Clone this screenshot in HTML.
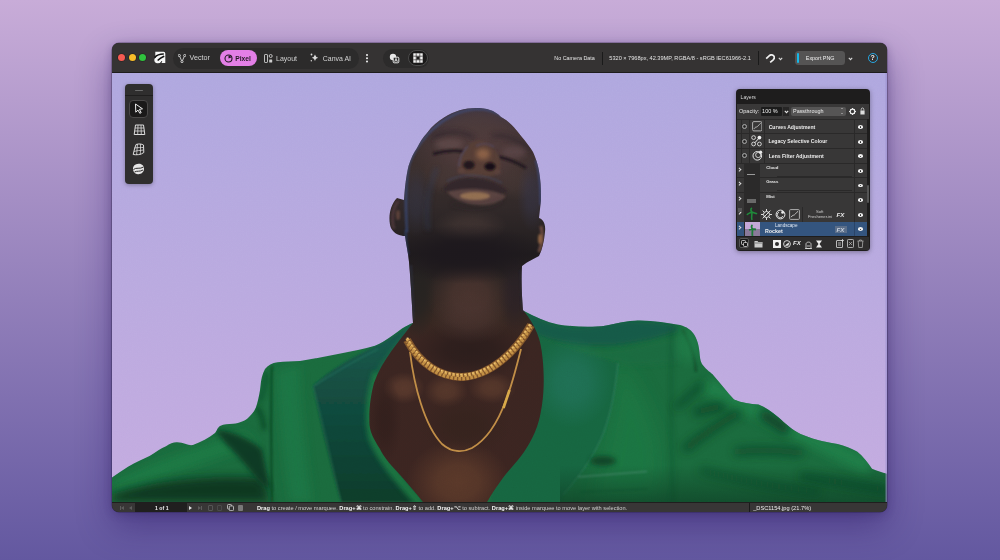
<!DOCTYPE html>
<html><head><meta charset="utf-8">
<style>
*{margin:0;padding:0;box-sizing:border-box}
html,body{width:1000px;height:560px;overflow:hidden}
body{position:relative;font-family:"Liberation Sans",sans-serif;background:linear-gradient(180deg,#c8acd8 0%,#6358a0 100%)}
.win{will-change:transform;position:absolute;left:112px;top:43px;width:775px;height:469px;border-radius:7px;background:#2a2929;overflow:hidden;box-shadow:0 0 0 0.5px rgba(30,20,50,.5),0 2px 8px rgba(40,25,80,.3),0 14px 34px rgba(40,20,100,.45)}
.title{position:absolute;left:0;top:0;width:775px;height:30px;background:#353333;border-bottom:1px solid #1e1d1d}
.canvas{position:absolute;left:0;top:30px;width:775px;height:428.5px;overflow:hidden}
.status{position:absolute;left:0;top:458.5px;width:775px;height:10.5px;background:#383636;border-top:0.8px solid #1f1e1e}
.abs{position:absolute}
.txt{color:#e8e8e8;white-space:nowrap}
.dot{top:11.3px;width:7px;height:7px;border-radius:50%;box-shadow:0 0 0 0.6px rgba(0,0,0,.35)}
.row{left:1px;width:130.5px;background:#383737}
.chk{left:6.2px;width:5px;height:5px;border-radius:50%;border:1.1px solid #a8a8a8;margin-top:-0.6px}
.chk::after{content:"";position:absolute;left:1.1px;top:1.1px;width:0.9px;height:0.9px;border-radius:50%;background:#111}
.lt{font-size:5.1px;line-height:6px;font-weight:700;color:#ececec}
.sm{font-size:4.3px;line-height:5px;font-weight:700;color:#e6e6e6}
.arr{left:2.2px;width:2.6px;height:2.6px;border-right:1px solid #e0e0e0;border-top:1px solid #e0e0e0;transform:rotate(45deg)}
.eye{left:121.9px;width:5.4px;height:3.8px;border-radius:50%;background:#f0f0f0;margin-top:0.2px}
.eye::after{content:"";position:absolute;left:1.9px;top:1.1px;width:1.6px;height:1.6px;border-radius:50%;background:#222}
.fx{font-size:6.2px;line-height:7px;font-weight:700;color:#e8e8e8;font-style:italic}
.stat{font-size:5.68px;line-height:6.5px;color:#d0d0d0}
.stat b{color:#f4f4f4}
</style></head><body>
<div class="win">
<div class="title">
  <div class="abs dot" style="left:6.4px;background:#f65b52"></div>
  <div class="abs dot" style="left:16.8px;background:#f8bd2a"></div>
  <div class="abs dot" style="left:27.2px;background:#30c23e"></div>
  <svg class="abs" style="left:41.9px;top:8.3px" width="12" height="13" viewBox="0 0 12 13">
    <path d="M1.3,0.8 L9.6,0.8 Q11.3,0.8 11.3,2.6 L11.3,12 L7.4,12 L7.6,10.9 Q6,12.3 3.4,12.2 Q0.3,12 0.3,9 Q0.3,6.4 3.5,5.4 L1.3,5.4 Z" fill="#f6f6f6"/>
    <path d="M0.5,6.6 Q3.8,2.9 9.8,3" stroke="#111" stroke-width="1.6" fill="none"/>
    <path d="M4.2,9 Q6.3,6.9 9.6,5.5" stroke="#111" stroke-width="1.7" fill="none" stroke-linecap="round"/><path d="M6.6,12.2 L7.9,10" stroke="#111" stroke-width="0.8"/>
  </svg>
  <div class="abs" style="left:61.2px;top:4.5px;width:186px;height:21px;border-radius:10.5px;background:#2c2b2b"></div>
  <!-- Vector -->
  <svg class="abs" style="left:65.5px;top:10.5px" width="8" height="9" viewBox="0 0 8 9">
    <circle cx="1.3" cy="1.5" r="1.1" fill="none" stroke="#d8d8d8" stroke-width="0.9"/>
    <circle cx="6.7" cy="1.5" r="1.1" fill="none" stroke="#d8d8d8" stroke-width="0.9"/>
    <circle cx="4" cy="7.6" r="1.1" fill="none" stroke="#d8d8d8" stroke-width="0.9"/>
    <path d="M1.8,2.5 L3.5,6.6 M6.2,2.5 L4.5,6.6" stroke="#d8d8d8" stroke-width="0.9"/>
  </svg>
  <div class="abs txt" style="left:77.6px;top:11.3px;font-size:7.16px;line-height:9px;color:#d4d4d4">Vector</div>
  <div class="abs" style="left:107.7px;top:6.75px;width:37.5px;height:16px;border-radius:8px;background:#e37fe6"></div>
  <svg class="abs" style="left:111.8px;top:10.6px" width="9" height="9" viewBox="0 0 9 9">
    <circle cx="4.5" cy="4.5" r="3.5" fill="none" stroke="#231a24" stroke-width="1.1"/>
    <path d="M4.5,4.5 L4.5,1.5 A3,3 0 0 1 7.3,3.6 Z" fill="#231a24"/>
  </svg>
  <div class="abs txt" style="left:123.3px;top:11px;font-size:6.7px;line-height:9px;font-weight:700;color:#231a24">Pixel</div>
  <svg class="abs" style="left:152px;top:10.5px" width="9" height="9" viewBox="0 0 9 9">
    <rect x="0.5" y="0.5" width="3" height="8" rx="0.6" fill="none" stroke="#cfcfcf" stroke-width="0.9"/>
    <rect x="5.2" y="0.5" width="3" height="3" rx="1.5" fill="none" stroke="#cfcfcf" stroke-width="0.9"/>
    <rect x="5.2" y="5.5" width="3" height="3" rx="0.5" fill="#cfcfcf"/>
  </svg>
  <div class="abs txt" style="left:164px;top:10.9px;font-size:7px;line-height:9px;color:#d0d0d0">Layout</div>
  <svg class="abs" style="left:198.3px;top:10.3px" width="9" height="9" viewBox="0 0 9 9">
    <path d="M5,1.5 Q5.6,4 8.2,4.8 Q5.6,5.4 5,8 Q4.4,5.4 1.8,4.8 Q4.4,4 5,1.5 Z" fill="#dcdcdc"/>
    <circle cx="1.5" cy="1.5" r="0.9" fill="#dcdcdc"/>
    <circle cx="1.3" cy="7.8" r="0.7" fill="#dcdcdc"/>
  </svg>
  <div class="abs txt" style="left:210.8px;top:10.9px;font-size:6.95px;line-height:9px;color:#d4d4d4">Canva AI</div>
  <div class="abs" style="left:253.6px;top:10.5px;width:2.1px;height:2.1px;border-radius:50%;background:#f4f4f4;box-shadow:0 3.25px 0 #f4f4f4,0 6.5px 0 #f4f4f4"></div>
  <div class="abs" style="left:271.2px;top:6px;width:46px;height:18.8px;border-radius:9.4px;background:#2c2b2b"></div>
  <svg class="abs" style="left:276.5px;top:10px" width="11" height="11" viewBox="0 0 11 11">
    <circle cx="4" cy="4" r="3.2" fill="#e8e8e8"/>
    <rect x="4.2" y="4.2" width="5.6" height="5.6" rx="1" fill="#2a2a2a" stroke="#e8e8e8" stroke-width="1"/>
    <path d="M5.6,8.8 L7,5.4 L8.4,8.8 M6.1,7.7 L7.9,7.7" stroke="#e8e8e8" stroke-width="0.8" fill="none"/>
  </svg>
  <div class="abs" style="left:296px;top:6.75px;width:20.3px;height:16.5px;border-radius:8px;background:#1b1a1a;border:1px solid #4a4a4a"></div>
  <svg class="abs" style="left:301.2px;top:9.8px" width="10" height="10" viewBox="0 0 10 10">
    <rect x="0.3" y="0.3" width="9.4" height="9.4" fill="#f2f2f2"/>
    <rect x="3.5" y="3.5" width="3" height="3" fill="#1b1a1a"/>
    <path d="M3.2,0.3 V9.7 M6.8,0.3 V9.7 M0.3,3.2 H9.7 M0.3,6.8 H9.7" stroke="#1b1a1a" stroke-width="0.6"/>
  </svg>
  <div class="abs txt" style="left:442.3px;top:12.2px;font-size:5.42px;line-height:7px;color:#e4e4e4">No Camera Data</div>
  <div class="abs" style="left:490.3px;top:8.6px;width:0.9px;height:13.2px;background:#1a1a1a"></div>
  <div class="abs txt" style="left:497.3px;top:12.2px;font-size:5.6px;line-height:7px;color:#e4e4e4">5320 × 7968px, 42.39MP, RGBA/8 - sRGB IEC61966-2.1</div>
  <div class="abs" style="left:645.8px;top:8px;width:0.9px;height:13.8px;background:#1a1a1a"></div>
  <svg class="abs" style="left:653.2px;top:10.8px" width="10" height="9" viewBox="0 0 10 9">
    <path d="M1.2,4.6 L4.4,1.6 C5.8,0.4 7.8,0.6 8.8,2 C9.6,3.2 9.3,4.8 8.2,5.8 L5.2,8.4" stroke="#f0f0f0" stroke-width="1.7" fill="none"/>
    <path d="M3.2,6.2 L6.4,3.4" stroke="#353333" stroke-width="1" fill="none"/>
  </svg>
  <svg class="abs" style="left:665.7px;top:13.6px" width="5" height="4" viewBox="0 0 5 4"><path d="M0.8,0.9 L2.5,2.6 L4.2,0.9" stroke="#dcdcdc" stroke-width="1.1" fill="none"/></svg>
  <div class="abs" style="left:683px;top:8.2px;width:50.4px;height:13.6px;border-radius:3.5px;background:#555454"></div>
  <div class="abs" style="left:685px;top:10.4px;width:2.4px;height:9.6px;border-radius:1px;background:#16b8e8"></div>
  <div class="abs txt" style="left:693.8px;top:12px;font-size:5.4px;line-height:7px;color:#f0f0f0">Export PNG</div>
  <svg class="abs" style="left:736.1px;top:13.6px" width="5" height="4" viewBox="0 0 5 4"><path d="M0.8,0.9 L2.5,2.6 L4.2,0.9" stroke="#dcdcdc" stroke-width="1.1" fill="none"/></svg>
  <div class="abs" style="left:755.9px;top:10px;width:10px;height:10px;border-radius:50%;border:1.3px solid #27a6e0"></div>
  <div class="abs txt" style="left:758.6px;top:11.2px;font-size:7px;line-height:8px;font-weight:700;color:#f0f0f0">?</div>
</div>
<div class="canvas">
<svg width="775" height="429" viewBox="112 73 775 429" style="position:absolute;left:0;top:0">
<defs>
  <linearGradient id="sky" x1="0" y1="0" x2="0" y2="1">
    <stop offset="0" stop-color="#afa7df"/>
    <stop offset="1" stop-color="#c4abe0"/>
  </linearGradient>
  <filter id="b1" filterUnits="userSpaceOnUse" x="100" y="60" width="800" height="460"><feGaussianBlur stdDeviation="1"/></filter>
  <filter id="b2" filterUnits="userSpaceOnUse" x="100" y="60" width="800" height="460"><feGaussianBlur stdDeviation="2.5"/></filter>
  <filter id="b4" filterUnits="userSpaceOnUse" x="100" y="60" width="800" height="460"><feGaussianBlur stdDeviation="5"/></filter>
  <filter id="b8" filterUnits="userSpaceOnUse" x="100" y="60" width="800" height="460"><feGaussianBlur stdDeviation="9"/></filter>
  <radialGradient id="face" cx="480" cy="175" r="80" gradientUnits="userSpaceOnUse">
    <stop offset="0" stop-color="#5a4248"/>
    <stop offset="0.6" stop-color="#4a3e56"/>
    <stop offset="1" stop-color="#3f3d62"/>
  </radialGradient>
  <linearGradient id="neck" x1="0" y1="0" x2="0" y2="1">
    <stop offset="0" stop-color="#2c2230"/>
    <stop offset="0.35" stop-color="#46302e"/>
    <stop offset="1" stop-color="#3d2620"/>
  </linearGradient>
  <linearGradient id="jk" x1="0" y1="0" x2="0" y2="1">
    <stop offset="0" stop-color="#1d7238"/>
    <stop offset="1" stop-color="#1a6a34"/>
  </linearGradient>
  <clipPath id="jclip"><path id="jpath" d="M112,502 L112,477.5 C118,473 123,470 128,466.7 C136,462 143,459 150,455.8 C156,452 161,448 166,446.3 C170,443 174,442 177,442.2 C184,442 188,446 193,445 C201,442 209,438 215,433 C217,431 217,428 220,426 C224,424 228,424 233,423.8 C240,423 245,421 249,417 C253,413 256,409 257,404 C259,397 260,391 260.5,386 C261,380 262,375 265,369 C268,365 272,363 277.5,362.2 C285,361.5 292,361.5 300,361 C314,359 327,356 340.5,353.4 C352,351 364,349 375,345.7 C386,341 394,334 402,328.4 C406,326 410,324 413.5,322.7 L524,311 C535,317 546,322 558,324.5 C571,326.5 584,327 597,326.5 C610,326 622,321 635,320.7 C651,320 666,323 680,325 C687,327 691,330 693,333 C697,338 699,346 699.5,352.5 C700,357 700,360 702,364 C707,371 711,372 714,376 C720,383 727,392 734,399.6 C742,403 750,404 758.5,404.6 C765,407 772,412 778,417 C785,423 792,430 800.5,434 C812,439 825,442 837.5,444 C845,446 851,448 857,451.5 C863,456 868,463 872,468.8 C877,471 882,472.5 887,473.7 L887,502 Z"/></clipPath>
  <filter id="grain" filterUnits="userSpaceOnUse" x="112" y="73" width="775" height="429"><feTurbulence type="fractalNoise" baseFrequency="0.8" numOctaves="2" seed="3"/><feColorMatrix type="matrix" values="0 0 0 0 0.5  0 0 0 0 0.5  0 0 0 0 0.5  0 0 0 0.09 0"/></filter>
<radialGradient id="rg0"><stop offset="0" stop-color="#287868" stop-opacity="0.500"/><stop offset="0.4" stop-color="#287868" stop-opacity="0.425"/><stop offset="0.7" stop-color="#287868" stop-opacity="0.200"/><stop offset="1" stop-color="#287868" stop-opacity="0"/></radialGradient>
<radialGradient id="rg1"><stop offset="0" stop-color="#22824a" stop-opacity="0.700"/><stop offset="0.4" stop-color="#22824a" stop-opacity="0.595"/><stop offset="0.7" stop-color="#22824a" stop-opacity="0.280"/><stop offset="1" stop-color="#22824a" stop-opacity="0"/></radialGradient>
<radialGradient id="rg2"><stop offset="0" stop-color="#22824a" stop-opacity="0.600"/><stop offset="0.4" stop-color="#22824a" stop-opacity="0.510"/><stop offset="0.7" stop-color="#22824a" stop-opacity="0.240"/><stop offset="1" stop-color="#22824a" stop-opacity="0"/></radialGradient>
<radialGradient id="rg3"><stop offset="0" stop-color="#5c3a2a" stop-opacity="0.900"/><stop offset="0.4" stop-color="#5c3a2a" stop-opacity="0.765"/><stop offset="0.7" stop-color="#5c3a2a" stop-opacity="0.360"/><stop offset="1" stop-color="#5c3a2a" stop-opacity="0"/></radialGradient>
<radialGradient id="rg4"><stop offset="0" stop-color="#33221c" stop-opacity="0.700"/><stop offset="0.4" stop-color="#33221c" stop-opacity="0.595"/><stop offset="0.7" stop-color="#33221c" stop-opacity="0.280"/><stop offset="1" stop-color="#33221c" stop-opacity="0"/></radialGradient>
<radialGradient id="rg5"><stop offset="0" stop-color="#221818" stop-opacity="0.600"/><stop offset="0.4" stop-color="#221818" stop-opacity="0.510"/><stop offset="0.7" stop-color="#221818" stop-opacity="0.240"/><stop offset="1" stop-color="#221818" stop-opacity="0"/></radialGradient>
<radialGradient id="rg6"><stop offset="0" stop-color="#4e3a3a" stop-opacity="1.000"/><stop offset="0.4" stop-color="#4e3a3a" stop-opacity="0.850"/><stop offset="0.7" stop-color="#4e3a3a" stop-opacity="0.400"/><stop offset="1" stop-color="#4e3a3a" stop-opacity="0"/></radialGradient>
<radialGradient id="rg7"><stop offset="0" stop-color="#4e3630" stop-opacity="0.800"/><stop offset="0.4" stop-color="#4e3630" stop-opacity="0.680"/><stop offset="0.7" stop-color="#4e3630" stop-opacity="0.320"/><stop offset="1" stop-color="#4e3630" stop-opacity="0"/></radialGradient>
<radialGradient id="rg8"><stop offset="0" stop-color="#4a3430" stop-opacity="0.600"/><stop offset="0.4" stop-color="#4a3430" stop-opacity="0.510"/><stop offset="0.7" stop-color="#4a3430" stop-opacity="0.240"/><stop offset="1" stop-color="#4a3430" stop-opacity="0"/></radialGradient>
<radialGradient id="rg9"><stop offset="0" stop-color="#1c171c" stop-opacity="1.000"/><stop offset="0.4" stop-color="#1c171c" stop-opacity="0.850"/><stop offset="0.7" stop-color="#1c171c" stop-opacity="0.400"/><stop offset="1" stop-color="#1c171c" stop-opacity="0"/></radialGradient>
<radialGradient id="rg10"><stop offset="0" stop-color="#21804a" stop-opacity="0.600"/><stop offset="0.4" stop-color="#21804a" stop-opacity="0.510"/><stop offset="0.7" stop-color="#21804a" stop-opacity="0.240"/><stop offset="1" stop-color="#21804a" stop-opacity="0"/></radialGradient>
<radialGradient id="rg11"><stop offset="0" stop-color="#22824e" stop-opacity="0.600"/><stop offset="0.4" stop-color="#22824e" stop-opacity="0.510"/><stop offset="0.7" stop-color="#22824e" stop-opacity="0.240"/><stop offset="1" stop-color="#22824e" stop-opacity="0"/></radialGradient>
<radialGradient id="rg12"><stop offset="0" stop-color="#5e3c2e" stop-opacity="0.800"/><stop offset="0.4" stop-color="#5e3c2e" stop-opacity="0.680"/><stop offset="0.7" stop-color="#5e3c2e" stop-opacity="0.320"/><stop offset="1" stop-color="#5e3c2e" stop-opacity="0"/></radialGradient>
<radialGradient id="rg13"><stop offset="0" stop-color="#5a3a2c" stop-opacity="0.800"/><stop offset="0.4" stop-color="#5a3a2c" stop-opacity="0.680"/><stop offset="0.7" stop-color="#5a3a2c" stop-opacity="0.320"/><stop offset="1" stop-color="#5a3a2c" stop-opacity="0"/></radialGradient>
<radialGradient id="rg14"><stop offset="0" stop-color="#5a3a2c" stop-opacity="0.800"/><stop offset="0.4" stop-color="#5a3a2c" stop-opacity="0.680"/><stop offset="0.7" stop-color="#5a3a2c" stop-opacity="0.320"/><stop offset="1" stop-color="#5a3a2c" stop-opacity="0"/></radialGradient>
<radialGradient id="rg15"><stop offset="0" stop-color="#2a1a18" stop-opacity="0.500"/><stop offset="0.4" stop-color="#2a1a18" stop-opacity="0.425"/><stop offset="0.7" stop-color="#2a1a18" stop-opacity="0.200"/><stop offset="1" stop-color="#2a1a18" stop-opacity="0"/></radialGradient>
<radialGradient id="rg16"><stop offset="0" stop-color="#443634" stop-opacity="0.700"/><stop offset="0.4" stop-color="#443634" stop-opacity="0.595"/><stop offset="0.7" stop-color="#443634" stop-opacity="0.280"/><stop offset="1" stop-color="#443634" stop-opacity="0"/></radialGradient>
<radialGradient id="rg17"><stop offset="0" stop-color="#443634" stop-opacity="0.600"/><stop offset="0.4" stop-color="#443634" stop-opacity="0.510"/><stop offset="0.7" stop-color="#443634" stop-opacity="0.240"/><stop offset="1" stop-color="#443634" stop-opacity="0"/></radialGradient>
<radialGradient id="rg18"><stop offset="0" stop-color="#242220" stop-opacity="0.800"/><stop offset="0.4" stop-color="#242220" stop-opacity="0.680"/><stop offset="0.7" stop-color="#242220" stop-opacity="0.320"/><stop offset="1" stop-color="#242220" stop-opacity="0"/></radialGradient>
<radialGradient id="rg19"><stop offset="0" stop-color="#2a2028" stop-opacity="0.600"/><stop offset="0.4" stop-color="#2a2028" stop-opacity="0.510"/><stop offset="0.7" stop-color="#2a2028" stop-opacity="0.240"/><stop offset="1" stop-color="#2a2028" stop-opacity="0"/></radialGradient>
<radialGradient id="rg20"><stop offset="0" stop-color="#3e3230" stop-opacity="0.900"/><stop offset="0.4" stop-color="#3e3230" stop-opacity="0.765"/><stop offset="0.7" stop-color="#3e3230" stop-opacity="0.360"/><stop offset="1" stop-color="#3e3230" stop-opacity="0"/></radialGradient>
<radialGradient id="rg21"><stop offset="0" stop-color="#343c58" stop-opacity="0.330"/><stop offset="0.4" stop-color="#343c58" stop-opacity="0.281"/><stop offset="0.7" stop-color="#343c58" stop-opacity="0.132"/><stop offset="1" stop-color="#343c58" stop-opacity="0.000"/></radialGradient>
<radialGradient id="rg22"><stop offset="0" stop-color="#383c5c" stop-opacity="0.350"/><stop offset="0.4" stop-color="#383c5c" stop-opacity="0.297"/><stop offset="0.7" stop-color="#383c5c" stop-opacity="0.140"/><stop offset="1" stop-color="#383c5c" stop-opacity="0.000"/></radialGradient>
<radialGradient id="rg23"><stop offset="0" stop-color="#4a3a3a" stop-opacity="0.600"/><stop offset="0.4" stop-color="#4a3a3a" stop-opacity="0.510"/><stop offset="0.7" stop-color="#4a3a3a" stop-opacity="0.240"/><stop offset="1" stop-color="#4a3a3a" stop-opacity="0"/></radialGradient>
</defs>
<rect x="112" y="73" width="775" height="429" fill="url(#sky)"/>
<!-- jacket -->
<use href="#jpath" fill="#1a6a3d"/>
<g clip-path="url(#jclip)">
  <!-- left sleeve -->
  <path d="M112,482 C150,462 200,446 245,432 L258,446 C215,458 160,478 112,496 Z" fill="#1f7a45" filter="url(#b4)" opacity="0.8"/>
  <path d="M112,494 C150,482 205,474 262,478 L270,502 L112,502 Z" fill="#0c321e" filter="url(#b4)" opacity="0.9"/>
  <path d="M217,430 C235,432 252,440 262,450 L270,490 C255,480 245,462 232,450 C226,444 220,438 217,430 Z" fill="#0b3420" filter="url(#b2)" opacity="0.9"/>
  <path d="M257,407 C262,415 264,422 264,430" stroke="#0a3a1e" stroke-width="3.5" fill="none" filter="url(#b2)" opacity="0.8"/>
  <path d="M259,402 C264,393 266,385 266,372" stroke="#0d4424" stroke-width="3" fill="none" filter="url(#b2)" opacity="0.7"/>
  <path d="M272,366 C271,400 271,450 272,502" stroke="#0a3a1e" stroke-width="1.6" fill="none" filter="url(#b1)" opacity="0.8"/>
  <path d="M276,372 C279,420 284,470 290,502 L312,502 C305,450 300,400 300,364 Z" fill="#1e7846" filter="url(#b4)" opacity="0.7"/>
  <!-- left lapel -->
  <linearGradient id="llap" x1="0" y1="345" x2="0" y2="502" gradientUnits="userSpaceOnUse">
    <stop offset="0" stop-color="#145548"/>
    <stop offset="0.5" stop-color="#11463a"/>
    <stop offset="1" stop-color="#0e3c2a"/>
  </linearGradient>
  <path d="M313,386 C330,370 352,357 376,346 C394,337 405,328 414,323 L432,502 L341,502 C332,470 320,420 313,386 Z" fill="url(#llap)" filter="url(#b1)"/>
  <path d="M314,386 C335,372 356,360 378,349" stroke="#2a7a66" stroke-width="1.2" fill="none" filter="url(#b1)" opacity="0.7"/>
  <path d="M313,386 C325,430 333,470 341,502" stroke="#2a7a5a" stroke-width="1" fill="none" filter="url(#b1)" opacity="0.7"/>
  <path d="M378,372 C371,395 368,420 374,440 C385,465 405,485 421,504" stroke="#1b7842" stroke-width="10" fill="none" filter="url(#b2)" opacity="0.9"/>
  <path d="M412,330 C400,345 388,360 380,372" stroke="#1a6e44" stroke-width="8" fill="none" filter="url(#b2)" opacity="0.7"/>
  <!-- right collar / lapel -->
  <path d="M600,340 C625,360 650,400 660,440 C665,470 660,490 655,502 L590,502 C600,470 612,420 618,363 Z" fill="#1f7a45" filter="url(#b8)" opacity="0.6"/>
  <path d="M524,311 C540,318 550,323 558,325 C575,328 590,328 605,323 C620,320 650,320 672,324 L680,330 C660,338 640,342 620,345 C590,347 560,344 535,335 Z" fill="#175848" filter="url(#b2)" opacity="0.9"/>
  <path d="M545,343 C580,352 610,352 640,345 C660,340 672,338 680,338 L680,362 C650,365 630,368 618,363 C590,358 565,352 545,343 Z" fill="#1a6a42" filter="url(#b2)" opacity="0.6"/>
  <path d="M683,330 C690,345 695,355 696,372" stroke="#0e4426" stroke-width="2.5" fill="none" filter="url(#b1)" opacity="0.7"/>
  <path d="M526,330 C555,345 590,356 618,363 C616,385 612,410 604,432 C596,452 585,470 563,495 L560,502 L490,502 Z" fill="#186540" filter="url(#b1)"/>
  <ellipse cx="572" cy="382" rx="40" ry="46" fill="url(#rg0)"/>
  <path d="M618,363 C616,385 612,410 604,432 C596,452 585,470 563,495" stroke="#3e8a72" stroke-width="1" fill="none" filter="url(#b1)" opacity="0.7"/>
  <path d="M672,328 C671,370 670,430 673,502" stroke="#0e4426" stroke-width="1.6" fill="none" filter="url(#b2)" opacity="0.6"/>
  <path d="M578,477 L647,471.5" stroke="#76a89c" stroke-width="0.9" fill="none" filter="url(#b1)" opacity="0.7"/>
  <path d="M580,492 L648,489" stroke="#0f4a2a" stroke-width="1" fill="none" filter="url(#b1)" opacity="0.5"/>
  <ellipse cx="603" cy="461" rx="13" ry="5" fill="#0c3a22" filter="url(#b2)" opacity="0.8"/>
  <!-- right shoulder -->
  <ellipse cx="688" cy="345" rx="18" ry="25" fill="url(#rg10)"/>
  <!-- right sleeve -->
  <linearGradient id="rsb" x1="0" y1="465" x2="0" y2="502" gradientUnits="userSpaceOnUse"><stop offset="0" stop-color="#0c3a22" stop-opacity="0"/><stop offset="1" stop-color="#0c3a22" stop-opacity="0.75"/></linearGradient>
  <rect x="560" y="465" width="327" height="37" fill="url(#rsb)" opacity="0.8"/>
  <path d="M705,385 C740,400 790,432 870,466" stroke="#23874e" stroke-width="16" fill="none" filter="url(#b4)" opacity="0.65"/>
  <path d="M676,408 C686,399 694,391 703,384" stroke="#0b3a20" stroke-width="5" fill="none" filter="url(#b4)" opacity="0.8"/>
  <path d="M694,413 C704,410 713,408 724,406" stroke="#0b3a20" stroke-width="7" fill="none" filter="url(#b4)" opacity="0.85"/>
  <path d="M684,450 C700,437 720,423 740,412" stroke="#0c3c22" stroke-width="7" fill="none" filter="url(#b4)" opacity="0.8"/>
  <path d="M761,413 C769,418 778,424 788,431" stroke="#0a3620" stroke-width="10" fill="none" filter="url(#b4)" opacity="0.9"/>
  <path d="M735,452 C758,449 780,450 802,453" stroke="#0d4026" stroke-width="7" fill="none" filter="url(#b4)" opacity="0.8"/>
  <path d="M800,476 C830,480 858,486 887,490" stroke="#0d3e24" stroke-width="6" fill="none" filter="url(#b4)" opacity="0.8"/>
  <path d="M700,470 C740,480 780,488 820,492" stroke="#0d3e24" stroke-width="6" fill="none" filter="url(#b4)" opacity="0.6"/>
</g>
<!-- neck + chest -->
<linearGradient id="fig" x1="0" y1="109" x2="0" y2="502" gradientUnits="userSpaceOnUse">
  <stop offset="0" stop-color="#3a3444"/>
  <stop offset="0.06" stop-color="#3e3234"/>
  <stop offset="0.155" stop-color="#3a2e2c"/>
  <stop offset="0.25" stop-color="#302828"/>
  <stop offset="0.31" stop-color="#282223"/>
  <stop offset="0.37" stop-color="#1f1b1d"/>
  <stop offset="0.45" stop-color="#2a2321"/>
  <stop offset="0.53" stop-color="#342620"/>
  <stop offset="0.59" stop-color="#3a2521"/>
  <stop offset="1" stop-color="#3b2420"/>
</linearGradient>
<clipPath id="hclip"><path id="hpath" d="M423,502 C415,492 408,484 401,476 C392,466 384,458 380,449 C373,438 369,430 369.4,421 C369,408 371,394 374,383 C382,360 400,340 413,323 C412,305 411,285 409,262 C408,252 406,244 405,236 C400,236 394,234 391,228 C388,220 389,206 397,198 L404,200 C405,186 406,177 408.5,166 C411,158 414,152 417,148 C420,142 423,137 427,133 C432,126 438,121 444,117.5 C454,111 465,108 476,108 C487,108 494,110 501,117 C509,121 515,128 521,136 C526,142 530,147 533,152 C537,161 539,168 540,178 C541,186 541,193 541,200 L539,218 C543,219 546,224 545,232 C544,242 542,250 539,256 C533,259 527,262 522,266 C521,280 522,298 523,310 C530,318 537,330 540,342 C544,360 545,385 542,405 C540,418 538,425 535,432 C528,448 520,458 512,467 C503,477 496,487 487,502 Z"/></clipPath>
<use href="#hpath" fill="url(#fig)"/>
<g clip-path="url(#hclip)">
  <!-- chest -->
  <ellipse cx="404" cy="388" rx="21" ry="16" fill="url(#rg12)"/>
  <ellipse cx="446" cy="391" rx="22" ry="17" fill="url(#rg13)"/>
  <ellipse cx="492" cy="388" rx="24" ry="16" fill="url(#rg14)"/>
  <ellipse cx="458" cy="482" rx="52" ry="42" fill="url(#rg3)"/>
  <ellipse cx="465" cy="425" rx="46" ry="30" fill="url(#rg4)"/>
  <ellipse cx="385" cy="420" rx="17" ry="44" fill="url(#rg15)"/>
  <ellipse cx="470" cy="350" rx="61" ry="30" fill="url(#rg5)"/>
  <!-- warm center of face -->
  <ellipse cx="478" cy="150" rx="64" ry="52" fill="url(#rg6)"/>
  <ellipse cx="443" cy="176" rx="21" ry="19" fill="url(#rg16)"/>
  <ellipse cx="516" cy="182" rx="19" ry="19" fill="url(#rg17)"/>
  <!-- neck -->
  <ellipse cx="470" cy="295" rx="44" ry="36" fill="url(#rg7)"/>
  <ellipse cx="470" cy="318" rx="41" ry="26" fill="url(#rg8)"/>
  
  
  <ellipse cx="418" cy="295" rx="18" ry="44" fill="url(#rg18)"/>
  <ellipse cx="515" cy="295" rx="17" ry="39" fill="url(#rg19)"/>
  <!-- chin / lower face -->
  <ellipse cx="470" cy="226" rx="37" ry="18" fill="url(#rg20)"/>
  <ellipse cx="466" cy="254" rx="78" ry="30" fill="url(#rg9)"/>
  <!-- cheeks sheen -->
  <ellipse cx="416" cy="200" rx="15" ry="37" fill="url(#rg21)"/>
  <ellipse cx="532" cy="195" rx="15" ry="37" fill="url(#rg22)"/>
  <!-- rim highlight -->
  <path d="M407,232 C405,200 406,178 409,165 C412,154 418,145 427,135 C440,121 458,110 478,109 C490,109 497,112 503,117" stroke="#3e5590" stroke-width="2.4" fill="none" filter="url(#b1)" opacity="0.6"/>
  <path d="M437,168 C429,185 426,205 428,230" stroke="#2e3a56" stroke-width="3" fill="none" filter="url(#b2)" opacity="0.6"/>
  <path d="M408,255 C406,245 405,238 406,230" stroke="#34487a" stroke-width="2.2" fill="none" filter="url(#b1)" opacity="0.6"/>
  <path d="M536,160 C540,172 541,188 541,205" stroke="#40508a" stroke-width="3" fill="none" filter="url(#b1)" opacity="0.6"/>
  <path d="M521,270 C522,285 522,300 523,312" stroke="#2e3040" stroke-width="2" fill="none" filter="url(#b1)" opacity="0.6"/>
  <path d="M411,265 C412,290 413,305 413,320" stroke="#30344a" stroke-width="2" fill="none" filter="url(#b1)" opacity="0.6"/>
  <ellipse cx="476" cy="125" rx="37" ry="18" fill="url(#rg23)"/>
  <!-- brow / lids -->
  <path d="M432,138 C445,130 463,130 474,138" stroke="#2c222c" stroke-width="4" fill="none" filter="url(#b2)" opacity="0.6"/>
  <path d="M492,136 C505,134 520,140 530,150" stroke="#2c222c" stroke-width="4" fill="none" filter="url(#b2)" opacity="0.6"/>
  <ellipse cx="449" cy="144" rx="14" ry="5.5" fill="#5e4848" filter="url(#b2)" opacity="0.8"/>
  <ellipse cx="514" cy="152" rx="12" ry="6" fill="#5a4446" filter="url(#b2)" opacity="0.8"/>
  <path d="M433,154 C443,151 455,150 464,151.5" stroke="#1f161c" stroke-width="2.6" fill="none" filter="url(#b1)"/>
  <path d="M499,157 C509,159 518,163 526,168" stroke="#1f161c" stroke-width="2.6" fill="none" filter="url(#b1)"/>
  <!-- nose -->
  <path d="M472,142 C479,139 487,141 491,146 C498,152 502,161 500,170 C498,176 490,177 480,176 C469,176 459,175 458,168 C457,159 464,148 472,142 Z" fill="#543c36" filter="url(#b1)"/>
  <path d="M468,146 C463,151 459,158 459,167" stroke="#50527e" stroke-width="1.5" fill="none" filter="url(#b1)" opacity="0.6"/>
  <ellipse cx="483" cy="154" rx="7" ry="5.5" fill="#94664a" filter="url(#b2)" opacity="0.85"/>
  <path d="M476,146 C481,143 488,143 494,147" stroke="#54527a" stroke-width="1.3" fill="none" filter="url(#b1)" opacity="0.7"/>
  <ellipse cx="469" cy="165" rx="5.8" ry="4.2" fill="#22171a" filter="url(#b1)"/>
  <ellipse cx="490" cy="166.5" rx="5.5" ry="4" fill="#170f12" filter="url(#b1)"/>
  <ellipse cx="461" cy="171" rx="4" ry="3" fill="#5e4440" filter="url(#b1)" opacity="0.6"/>
  <ellipse cx="498" cy="172" rx="3.5" ry="3" fill="#5e4440" filter="url(#b1)" opacity="0.5"/>
  <!-- lips -->
  <path d="M442,190 C453,175 483,172 508,191 C500,197 470,198 442,190 Z" fill="#33262a" filter="url(#b1)"/>
  <path d="M447,181 C462,173 484,173 502,183" stroke="#3e4a6a" stroke-width="1.5" fill="none" filter="url(#b1)" opacity="0.5"/>
  <path d="M447,192 C463,187 488,187 506,196 C496,209 464,209 447,192 Z" fill="#584240" filter="url(#b1)"/>
  <ellipse cx="475" cy="196" rx="15" ry="4" fill="#9a7452" filter="url(#b1)" opacity="0.85"/>
  <path d="M452,204 C468,209 490,208 502,200" stroke="#2a2028" stroke-width="2" fill="none" filter="url(#b2)" opacity="0.6"/>
  <!-- ears -->
  <path d="M398,201 C393,208 391,220 394,229" stroke="#4a3438" stroke-width="3" fill="none" filter="url(#b1)"/>
  <ellipse cx="398" cy="215" rx="2" ry="5" fill="#6e4c40" filter="url(#b1)" opacity="0.7"/>
  <path d="M541,226 C543,235 542,245 539,252" stroke="#6a4a40" stroke-width="3" fill="none" filter="url(#b1)"/>
  <ellipse cx="540" cy="239" rx="2" ry="5" fill="#a07048" filter="url(#b1)" opacity="0.8"/>
</g>
<!-- chains -->
<path d="M410,352 C414,385 424,425 442,444 C451,452 462,453 472,448 C486,440 498,422 506,400 C512,385 517,365 521,349" stroke="#c08c46" stroke-width="1.8" fill="none"/>
<path d="M509.5,390 L503.5,408" stroke="#d8a848" stroke-width="2.6" fill="none"/>
<path d="M407,340 C420,364 440,377 462,377 C490,376 516,352 531,325" stroke="#80542a" stroke-width="8" fill="none"/>
<path d="M407,340 C420,364 440,377 462,377 C490,376 516,352 531,325" transform="translate(0,-1.7)" stroke="#d6a352" stroke-width="3.4" stroke-dasharray="2.6 1.4" fill="none"/>
<path d="M407,340 C420,364 440,377 462,377 C490,376 516,352 531,325" transform="translate(0,1.7)" stroke="#c28e44" stroke-width="3.4" stroke-dasharray="2.6 1.4" stroke-dashoffset="2" fill="none"/>
<path d="M407,340 C420,364 440,377 462,377 C490,376 516,352 531,325" transform="translate(0,-2.4)" stroke="#f4d080" stroke-width="1.1" stroke-dasharray="1.4 2.6" fill="none" opacity="0.8"/>
<rect x="112" y="73" width="775" height="429" filter="url(#grain)" style="mix-blend-mode:overlay"/>
<!-- canvas right border line -->
<rect x="885.5" y="73" width="1.5" height="429" fill="#9b8fd0" opacity="0.6"/>
</svg>
<!-- tool panel -->
<div class="abs" style="left:13px;top:10.6px;width:27.6px;height:100px;border-radius:4px;background:#2f2e2e;box-shadow:0 1px 4px rgba(0,0,0,.3)">
  <div class="abs" style="left:10px;top:6px;width:8px;height:1.3px;background:#6a6a6a;border-radius:1px"></div>
  <div class="abs" style="left:0;top:11.8px;width:27.6px;height:0.8px;background:#1f1e1e"></div>
  <div class="abs" style="left:4.4px;top:16px;width:18.6px;height:18px;border-radius:4px;background:#1a1919;border:1px solid #4a4848"></div>
  <svg class="abs" style="left:9px;top:19.5px" width="10" height="11" viewBox="0 0 10 11">
    <path d="M1.5,1 L8.5,5.8 L5.4,6.4 L7.2,9.6 L5.8,10.3 L4,7.1 L1.8,9.2 Z" fill="none" stroke="#ececec" stroke-width="1" stroke-linejoin="round"/>
  </svg>
  <svg class="abs" style="left:7.5px;top:40px" width="13" height="12" viewBox="0 0 13 12">
    <path d="M2.5,1 H10.5 L11.8,10.5 H1.2 Z" fill="none" stroke="#dcdcdc" stroke-width="1"/>
    <path d="M1.9,4 H11.1 M1.6,7 H11.4 M5,1 L4.7,10.5 M8,1 L8.3,10.5" stroke="#dcdcdc" stroke-width="0.8"/>
  </svg>
  <svg class="abs" style="left:7.3px;top:59px" width="13" height="13" viewBox="0 0 13 13">
    <path d="M4,1.5 C7,0.5 10,1 11.5,2 L11.8,9.5 C9,12 4,12 1.2,11.5 L2.5,6 Z" fill="none" stroke="#dcdcdc" stroke-width="1"/>
    <path d="M2,8.5 C5,7.5 8,7.5 11.6,7 M2.3,5 C6,4.5 9,4.5 11.5,4.5 M5.5,1 C5,5 5,9 4.5,11.8 M8.5,1 C8.5,5 8.6,9 8.2,11.5" stroke="#dcdcdc" stroke-width="0.8" fill="none"/>
  </svg>
  <svg class="abs" style="left:7.3px;top:79.5px" width="13" height="12" viewBox="0 0 13 12">
    <path d="M6.5,0.8 C10,0.6 12.2,3 12,6 C11.8,9.5 9,11.4 6,11.2 C3,11 1,9 1,6 C1,3 3,0.9 6.5,0.8 Z" fill="#e6e6e6"/>
    <path d="M1.5,6.5 C4,4 8,6.5 11.5,4 M2.5,9 C5,7.5 8,9 11,7" stroke="#2f2e2e" stroke-width="1" fill="none"/>
  </svg>
</div>
<!-- layers panel -->
<div class="abs" style="left:624px;top:16.3px;width:134px;height:161.4px;border-radius:4px;background:#1e1d1d;box-shadow:0 1px 5px rgba(0,0,0,.35);overflow:hidden">
  <div class="abs txt" style="left:4.6px;top:4.6px;font-size:5.1px;line-height:6px;color:#d8d8d8">Layers</div>
  <!-- opacity row -->
  <div class="abs" style="left:1px;top:14.3px;width:132px;height:15.7px;background:#393838"></div>
  <div class="abs txt" style="left:2.9px;top:19px;font-size:5.56px;line-height:7px;color:#e4e4e4">Opacity:</div>
  <div class="abs" style="left:25px;top:17.4px;width:21px;height:9.4px;background:#1b1b1b;border-radius:1px"></div>
  <div class="abs txt" style="left:26.1px;top:19px;font-size:5.5px;line-height:7px;color:#f0f0f0">100 %</div>
  <div class="abs" style="left:46.5px;top:17.4px;width:6.8px;height:9.4px;background:#262525"></div>
  <svg class="abs" style="left:47.6px;top:20.4px" width="5" height="4" viewBox="0 0 5 4"><path d="M0.8,0.9 L2.5,2.6 L4.2,0.9" stroke="#e8e8e8" stroke-width="1.1" fill="none"/></svg>
  <div class="abs" style="left:55.4px;top:17.4px;width:54.6px;height:9.4px;background:#565555;border-radius:2px"></div>
  <div class="abs txt" style="left:57px;top:19px;font-size:5.45px;line-height:7px;color:#ececec">Passthrough</div>
  <div class="abs" style="left:104.5px;top:18.8px;width:0;height:0;border-left:1.4px solid transparent;border-right:1.4px solid transparent;border-bottom:1.8px solid #ccc"></div>
  <div class="abs" style="left:104.5px;top:23.8px;width:0;height:0;border-left:1.4px solid transparent;border-right:1.4px solid transparent;border-top:1.8px solid #ccc"></div>
  <svg class="abs" style="left:113.4px;top:18.6px" width="7" height="7" viewBox="0 0 7 7">
    <circle cx="3.5" cy="3.5" r="2.3" fill="none" stroke="#eee" stroke-width="1.2"/>
    <path d="M3.5,0 V1.2 M3.5,5.8 V7 M0,3.5 H1.2 M5.8,3.5 H7 M1,1 L1.8,1.8 M5.2,5.2 L6,6 M6,1 L5.2,1.8 M1.8,5.2 L1,6" stroke="#eee" stroke-width="1"/>
  </svg>
  <svg class="abs" style="left:124.3px;top:17.8px" width="5" height="8" viewBox="0 0 5 8">
    <path d="M1.2,3.5 V2.3 C1.2,0.5 3.8,0.5 3.8,2.3 V3.5" stroke="#ddd" stroke-width="0.8" fill="none"/>
    <rect x="0.4" y="3.5" width="4.2" height="4" fill="#ddd"/>
  </svg>
  <!-- rows area -->
  <div class="abs" style="left:1px;top:30px;width:130.5px;height:117px;background:#2a2929"></div>
  <!-- row 1-3 adjustments -->
  <div class="abs row" style="top:30.6px;height:13.6px"></div>
  <div class="abs row" style="top:45.2px;height:13.8px"></div>
  <div class="abs row" style="top:60px;height:13.6px"></div>
  <div class="abs row" style="top:74.6px;height:13.6px"></div>
  <div class="abs row" style="top:89.2px;height:13.6px"></div>
  <div class="abs row" style="top:103.6px;height:13.8px"></div>
  <div class="abs row" style="top:118.2px;height:14.2px"></div>
  <div class="abs" style="left:1px;top:132.8px;width:130.5px;height:14.4px;background:#34557f"></div>
  <!-- column separators -->
  <div class="abs" style="left:117.5px;top:30px;width:0.9px;height:117px;background:#2a2929"></div>
  <div class="abs" style="left:131px;top:30px;width:3px;height:117px;background:#1e1d1d"></div>
  <div class="abs" style="left:131.3px;top:95.7px;width:1.6px;height:18px;background:#555;border-radius:1px"></div>
  <!-- check column rows 1-3 -->
  <div class="abs" style="left:5px;top:30px;width:0.8px;height:44px;background:#2a2929"></div>
  <div class="abs" style="left:13.4px;top:30px;width:0.8px;height:44px;background:#2a2929"></div>
  <div class="abs" style="left:27.8px;top:30px;width:0.8px;height:44px;background:#2a2929"></div>
  <div class="abs chk" style="top:35.2px"></div>
  <div class="abs chk" style="top:50px"></div>
  <div class="abs chk" style="top:64.6px"></div>
  <!-- thumbs -->
  <svg class="abs" style="left:15.5px;top:32.2px" width="10.5" height="10.5" viewBox="0 0 10.5 10.5">
    <rect x="0.6" y="0.6" width="9.3" height="9.3" rx="1.3" fill="none" stroke="#bdbdbd" stroke-width="0.9"/>
    <path d="M2,8 C3.5,5 4.5,7 6,5 C7,3.8 8,3 8.8,2.2" stroke="#d0d0d0" stroke-width="0.8" fill="none"/>
    <path d="M2,8.5 L8.8,1.8" stroke="#777" stroke-width="0.4"/>
  </svg>
  <svg class="abs" style="left:15.3px;top:46px" width="11" height="12" viewBox="0 0 11 12">
    <circle cx="2.6" cy="2.6" r="1.9" fill="none" stroke="#e0e0e0" stroke-width="0.9"/>
    <circle cx="8.4" cy="2.6" r="1.9" fill="#f0f0f0"/>
    <circle cx="2.6" cy="9" r="1.9" fill="none" stroke="#e0e0e0" stroke-width="0.9"/>
    <circle cx="8.4" cy="9" r="1.9" fill="none" stroke="#e0e0e0" stroke-width="0.9"/>
    <path d="M3.8,7.8 L7.4,3.8" stroke="#f0f0f0" stroke-width="1"/>
  </svg>
  <svg class="abs" style="left:15.5px;top:61px" width="11" height="11" viewBox="0 0 11 11">
    <circle cx="5.3" cy="5.8" r="4.3" fill="none" stroke="#eaeaea" stroke-width="1"/>
    <circle cx="6.2" cy="5" r="2.6" fill="none" stroke="#eaeaea" stroke-width="0.8"/>
    <circle cx="8.6" cy="2.2" r="1.6" fill="#eaeaea"/>
  </svg>
  <div class="abs txt lt" style="left:32.7px;top:34.3px">Curves Adjustment</div>
  <div class="abs txt lt" style="left:32.4px;top:49.1px">Legacy Selective Colour</div>
  <div class="abs txt lt" style="left:32.7px;top:63.8px">Lens Filter Adjustment</div>
  <!-- group rows -->
  
  <div class="abs" style="left:8.4px;top:74.1px;width:15.3px;height:58.7px;background:#2b2a2a"></div>
  <div class="abs arr" style="top:78.5px"></div>
  <div class="abs arr" style="top:93px"></div>
  <div class="abs arr" style="top:107.5px"></div>
  <div class="abs arr" style="top:122px"></div>
  <div class="abs arr" style="top:136.8px"></div>
  <div class="abs txt sm" style="left:30.2px;top:75.8px">Cloud</div>
  <div class="abs txt sm" style="left:30.2px;top:90.2px">Grass</div>
  <div class="abs txt sm" style="left:30.2px;top:104.6px">Mist</div>
  <div class="abs" style="left:41px;top:86.5px;width:75px;height:0.8px;background:#2a2929"></div>
  <div class="abs" style="left:41px;top:100.9px;width:75px;height:0.8px;background:#2a2929"></div>
  <div class="abs" style="left:10.5px;top:84.5px;width:8px;height:1.2px;background:#9a9a9a"></div>
  <div class="abs" style="left:11px;top:110px;width:9px;height:4px;background:#6a6a6a"></div>
  <!-- fx row -->
  <svg class="abs" style="left:10px;top:117.5px" width="12" height="14" viewBox="0 0 12 14">
    <path d="M6,1 C4,2 5,4 6,5 C4,6 2,6 1,8 M6,5 C8,6 10,6 11,7 M6,5 C6,8 5,11 6,13" stroke="#1f8a3a" stroke-width="1.6" fill="none"/>
  </svg>
  <div class="abs" style="left:1.5px;top:119px;width:4px;height:4px;background:#555"></div>
  <svg class="abs" style="left:24.5px;top:119.8px" width="11" height="11" viewBox="0 0 11 11">
    <circle cx="5.5" cy="5.5" r="3" fill="none" stroke="#eee" stroke-width="1"/>
    <path d="M5.5,0 V2 M5.5,9 V11 M0,5.5 H2 M9,5.5 H11 M1.6,1.6 L3,3 M8,8 L9.4,9.4 M9.4,1.6 L8,3 M3,8 L1.6,9.4 M3,8 L8,3" stroke="#eee" stroke-width="0.9"/>
  </svg>
  <svg class="abs" style="left:38.5px;top:119.6px" width="11" height="11" viewBox="0 0 11 11">
    <circle cx="5.5" cy="5.5" r="4.4" fill="none" stroke="#e8e8e8" stroke-width="1"/>
    <path d="M4,3 A3,3 0 1 0 8,7" stroke="#e8e8e8" stroke-width="0.9" fill="none"/>
    <circle cx="7.6" cy="3.4" r="1.4" fill="#eee"/>
  </svg>
  <svg class="abs" style="left:53px;top:119.8px" width="11" height="11" viewBox="0 0 11 11">
    <rect x="0.6" y="0.6" width="9.8" height="9.8" rx="1" fill="none" stroke="#bbb" stroke-width="0.9"/>
    <path d="M2,8.2 C3.5,5.5 5,7 6.5,4.8 C7.5,3.5 8.3,2.8 9,2.3" stroke="#ddd" stroke-width="0.8" fill="none"/>
  </svg>
  <div class="abs" style="left:66px;top:118.2px;width:0.8px;height:14.2px;background:#2a2929"></div>
  <div class="abs txt" style="left:80px;top:119.4px;font-size:4.2px;line-height:5px;color:#ccc">Soft</div>
  <div class="abs txt" style="left:72px;top:124.3px;font-size:4.2px;line-height:5px;color:#ccc">Freshener.ini</div>
  <div class="abs txt fx" style="left:100.5px;top:121.8px">FX</div>
  <!-- rocket row -->
  <div class="abs" style="left:8.4px;top:132.8px;width:15.3px;height:14.4px;background:#2a2929"></div>
  <svg class="abs" style="left:8.6px;top:133px" width="15" height="14" viewBox="0 0 15 14">
    <rect x="0" y="0" width="15" height="14" fill="#c4a8d8"/>
    <rect x="0" y="7" width="15" height="7" fill="#8a7a9a"/>
    <path d="M7.5,3 C6,4 6.5,6 7.5,7 L4,8 M7.5,7 L11,7.5 M7.5,7 C7.5,10 7,12 7.5,14" stroke="#1f7a3a" stroke-width="1.8" fill="none"/>
  </svg>
  <div class="abs txt" style="left:39px;top:133.5px;font-size:4.6px;line-height:5px;color:#dde6f2">Landscape</div>
  <div class="abs txt" style="left:29px;top:138.8px;font-size:5.3px;line-height:6px;font-weight:700;color:#f0f0f0">Rocket</div>
  <div class="abs" style="left:99px;top:136.5px;width:12px;height:7.5px;background:#5a6e8a"></div>
  <div class="abs txt fx" style="left:100.5px;top:136.6px;color:#c8d0dc">FX</div>
  <div class="abs" style="left:117.5px;top:132.8px;width:0.9px;height:14.4px;background:#2a4468"></div>
  <!-- eyes -->
  <div class="abs eye" style="top:35.6px"></div>
  <div class="abs eye" style="top:50.4px"></div>
  <div class="abs eye" style="top:65px"></div>
  <div class="abs eye" style="top:79.6px"></div>
  <div class="abs eye" style="top:94.2px"></div>
  <div class="abs eye" style="top:108.8px"></div>
  <div class="abs eye" style="top:123.6px"></div>
  <div class="abs eye" style="top:138px"></div>
  <!-- bottom toolbar -->
  <div class="abs" style="left:1px;top:147.4px;width:132px;height:13px;background:#2f2e2e"></div>
  <div class="abs" style="left:3px;top:149px;width:10px;height:9.8px;border-radius:2px;background:#1a1a1a;border:0.8px solid #555"></div>
  <svg class="abs" style="left:4.8px;top:150.8px" width="7" height="7" viewBox="0 0 7 7"><rect x="0.5" y="0.5" width="4" height="4" rx="0.8" fill="none" stroke="#ddd" stroke-width="0.8"/><rect x="2.5" y="2.5" width="4" height="4" rx="0.8" fill="#1a1a1a" stroke="#ddd" stroke-width="0.8"/></svg>
  <svg class="abs" style="left:18px;top:150.5px" width="9" height="8" viewBox="0 0 9 8"><path d="M0.5,1 H3.5 L4.3,2 H8.5 V7.5 H0.5 Z" fill="#ccc"/><path d="M1,3 H8" stroke="#2f2e2e" stroke-width="0.5"/></svg>
  <svg class="abs" style="left:36.6px;top:150.7px" width="8" height="8" viewBox="0 0 8 8"><rect x="0" y="0" width="8" height="8" fill="#f0f0f0"/><circle cx="4" cy="4" r="2" fill="#2f2e2e"/></svg>
  <svg class="abs" style="left:46.6px;top:150.5px" width="8" height="8" viewBox="0 0 8 8"><circle cx="4" cy="4" r="3.4" fill="none" stroke="#e8e8e8" stroke-width="0.9"/><path d="M2,6 C3,4 5,3 6.2,2.2 L5.5,5.5 Z" fill="#e8e8e8"/></svg>
  <div class="abs txt fx" style="left:57px;top:151px;font-size:6px">FX</div>
  <svg class="abs" style="left:67.5px;top:150.3px" width="9" height="9" viewBox="0 0 9 9"><path d="M2,8.5 L2,4 C2,1.5 7,1.5 7,4 L7,8.5 Z" fill="none" stroke="#ddd" stroke-width="0.8"/><path d="M1,8.5 H8 M3,6 H6" stroke="#ddd" stroke-width="0.8"/></svg>
  <svg class="abs" style="left:78.5px;top:150.5px" width="8" height="8" viewBox="0 0 8 8"><path d="M1,0.5 H7 L4.5,4 L7,7.5 H1 L3.5,4 Z" fill="#eee"/></svg>
  <svg class="abs" style="left:100px;top:150px" width="8" height="9" viewBox="0 0 8 9"><rect x="0.5" y="1.5" width="6" height="7" rx="0.5" fill="none" stroke="#ddd" stroke-width="0.8"/><path d="M2,4 H5 M2,6 H5 M6.5,0 V3 M5,1.5 H8" stroke="#ddd" stroke-width="0.7"/></svg>
  <svg class="abs" style="left:110.5px;top:150px" width="7" height="9" viewBox="0 0 7 9"><rect x="0.5" y="0.5" width="6" height="8" rx="0.8" fill="none" stroke="#ccc" stroke-width="0.8"/><path d="M2,3 L5,6 M5,3 L2,6" stroke="#ccc" stroke-width="0.6"/></svg>
  <svg class="abs" style="left:120.5px;top:150px" width="7" height="9" viewBox="0 0 7 9"><path d="M0.5,2 H6.5 M2.5,2 V1 H4.5 V2 M1.2,2 L1.7,8.5 H5.3 L5.8,2" stroke="#aaa" stroke-width="0.8" fill="none"/></svg>
</div>
</div>
<div class="status">
  <div class="abs" style="left:8.3px;top:3.3px;width:0.8px;height:4.2px;background:#5c5b5b"></div>
  <div class="abs" style="left:9.3px;top:3.3px;width:0;height:0;border-top:2.1px solid transparent;border-bottom:2.1px solid transparent;border-right:3px solid #5c5b5b"></div>
  <div class="abs" style="left:17px;top:3.3px;width:0;height:0;border-top:2.1px solid transparent;border-bottom:2.1px solid transparent;border-right:3.2px solid #5c5b5b"></div>
  <div class="abs" style="left:22.75px;top:0;width:51.75px;height:10.5px;background:#201f1f;border-radius:0 0 0 0"></div>
  <div class="abs txt" style="left:43px;top:2.2px;font-size:5.2px;line-height:6px;font-weight:700;color:#f2f2f2">1 of 1</div>
  <div class="abs" style="left:76.5px;top:3px;width:0;height:0;border-top:2.3px solid transparent;border-bottom:2.3px solid transparent;border-left:3.6px solid #e0e0e0"></div>
  <div class="abs" style="left:85.5px;top:3.3px;width:0;height:0;border-top:2.1px solid transparent;border-bottom:2.1px solid transparent;border-left:3px solid #5c5b5b"></div>
  <div class="abs" style="left:88.8px;top:3.3px;width:0.8px;height:4.2px;background:#5c5b5b"></div>
  <div class="abs" style="left:96px;top:2.3px;width:5px;height:6px;border:0.8px solid #555;border-radius:1px"></div>
  <div class="abs" style="left:105px;top:2.3px;width:5px;height:6px;border:0.8px solid #4a4a4a;border-radius:1px"></div>
  <svg class="abs" style="left:115px;top:1.8px" width="7" height="7" viewBox="0 0 7 7"><rect x="0.5" y="0.5" width="4" height="4.5" rx="0.8" fill="none" stroke="#d0d0d0" stroke-width="0.8"/><rect x="2.3" y="2" width="4.2" height="4.6" rx="0.8" fill="#333" stroke="#d0d0d0" stroke-width="0.8"/></svg>
  <div class="abs" style="left:126px;top:2px;width:5px;height:6.5px;background:#7a7979;border-radius:1px"></div>
  <div class="abs txt stat" style="left:145px;top:2.1px"><b>Drag</b> to create / move marquee. <b>Drag+⌘</b> to constrain. <b>Drag+⇧</b> to add. <b>Drag+⌥</b> to subtract. <b>Drag+⌘</b> inside marquee to move layer with selection.</div>
  <div class="abs" style="left:637px;top:0;width:0.9px;height:10.5px;background:#1a1a1a"></div>
  <div class="abs txt stat" style="left:641.2px;top:2.1px;color:#ececec">_DSC1154.jpg (21.7%)</div>
</div>
</div>
</body></html>
